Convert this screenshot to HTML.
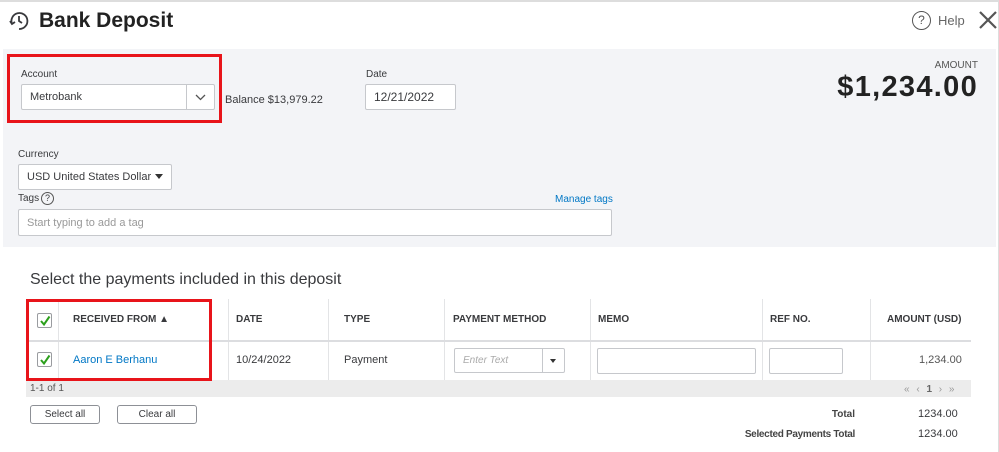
<!DOCTYPE html>
<html><head><style>
*{box-sizing:border-box;margin:0;padding:0}
body{width:999px;height:452px;overflow:hidden;background:#fff;font-family:"Liberation Sans",sans-serif;color:#393a3d;position:relative}
.a{position:absolute}
.inp{position:absolute;background:#fff;border:1px solid #c6c8cc;border-radius:2px;font-size:11px;color:#393a3d;padding-left:8px;display:flex;align-items:center}
.lbl{position:absolute;font-size:10px;color:#393a3d}
.th{position:absolute;top:314px;font-size:10px;font-weight:bold;color:#393a3d}
.vl{position:absolute;top:299px;height:81px;width:1px;background:#e3e4e6}
.cb{position:absolute;width:15px;height:15px;border:1px solid #9a9ca0;border-radius:2px;background:#fff}
.btn{position:absolute;height:19px;border:1px solid #8d9096;border-radius:3px;font-size:10px;display:flex;align-items:center;justify-content:center;background:#fff}
</style></head><body>
<div class="a" style="left:0;top:0;width:999px;height:2px;background:#ddd"></div>
<div class="a" style="left:998px;top:0;width:1px;height:452px;background:#ddd"></div>
<svg class="a" style="left:8px;top:10px" width="22" height="22" viewBox="0 0 22 22" fill="none" stroke="#393a3d" stroke-width="1.8"><path d="M4 14 A8 8 0 1 1 11 19"/><path d="M11 6v5l3 2"/><path d="M2 11l2 3 3-2"/></svg>
<div class="a" style="left:39px;top:9px;font-size:21px;font-weight:bold;color:#222">Bank Deposit</div>
<div class="a" style="left:912px;top:11px;width:19px;height:19px;border:1.5px solid #555;border-radius:50%;font-size:12px;text-align:center;line-height:16px;color:#555">?</div>
<div class="a" style="left:938px;top:13px;font-size:13px;color:#666">Help</div>
<svg class="a" style="left:978px;top:10px" width="20" height="20"><path d="M2 2L18 18M18 2L2 18" stroke="#555" stroke-width="2.2"/></svg>

<div class="a" style="left:3px;top:49px;width:993px;height:198px;background:#f3f4f7"></div>
<div class="a" style="left:7px;top:54px;width:215px;height:69px;border:3px solid #e8141a"></div>
<div class="lbl" style="left:21px;top:69px">Account</div>
<div class="inp" style="left:21px;top:84px;width:194px;height:26px">Metrobank</div>
<div class="a" style="left:186px;top:85px;width:1px;height:24px;background:#c6c8cc"></div>
<svg class="a" style="left:195px;top:94px" width="11" height="7"><path d="M1 1l4.5 4.5L10 1" stroke="#555" fill="none" stroke-width="1.3"/></svg>
<div class="a" style="left:225px;top:94px;font-size:11px">Balance $13,979.22</div>
<div class="lbl" style="left:366px;top:69px">Date</div>
<div class="inp" style="left:365px;top:84px;width:91px;height:26px;font-size:12px">12/21/2022</div>
<div class="a" style="right:21px;top:60px;font-size:10px;color:#555">AMOUNT</div>
<div class="a" style="right:21px;top:71px;font-size:29px;font-weight:bold;color:#222;letter-spacing:1.3px">$1,234.00</div>
<div class="lbl" style="left:18px;top:149px">Currency</div>
<div class="inp" style="left:18px;top:164px;width:154px;height:26px">USD United States Dollar</div>
<div class="a" style="left:155px;top:174px;border-left:4px solid transparent;border-right:4px solid transparent;border-top:5px solid #333"></div>
<div class="lbl" style="left:18px;top:193px">Tags</div>
<div class="a" style="left:41px;top:192px;width:13px;height:13px;border:1px solid #555;border-radius:50%;font-size:9px;text-align:center;line-height:11px">?</div>
<div class="a" style="left:555px;top:194px;font-size:10px;color:#0077c5">Manage tags</div>
<div class="inp" style="left:18px;top:209px;width:594px;height:27px;color:#999">Start typing to add a tag</div>

<div class="a" style="left:30px;top:271px;font-size:16px;color:#393a3d">Select the payments included in this deposit</div>
<div class="vl" style="left:58px"></div><div class="vl" style="left:228px"></div><div class="vl" style="left:328px"></div><div class="vl" style="left:444px"></div><div class="vl" style="left:590px"></div><div class="vl" style="left:762px"></div><div class="vl" style="left:870px"></div>
<div class="a" style="left:26px;top:340px;width:945px;height:2px;background:#dcdde0"></div>
<div class="a" style="left:26px;top:380px;width:945px;height:17px;background:#ececec"></div>
<div class="a" style="left:30px;top:383px;font-size:10px;color:#555">1-1 of 1</div>
<div class="a" style="left:904px;top:384px;font-size:10px;color:#999;letter-spacing:2px">« ‹ <b style="color:#666">1</b> › »</div>
<div class="cb" style="left:37px;top:313px"></div><svg class="a" style="left:39px;top:315px" width="12" height="12"><path d="M2 6l3 3.5L10.5 1.5" stroke="#2ca01c" stroke-width="2" fill="none"/></svg>
<div class="cb" style="left:37px;top:352px"></div><svg class="a" style="left:39px;top:354px" width="12" height="12"><path d="M2 6l3 3.5L10.5 1.5" stroke="#2ca01c" stroke-width="2" fill="none"/></svg>
<div class="th" style="left:73px">RECEIVED FROM ▲</div>
<div class="th" style="left:236px">DATE</div>
<div class="th" style="left:344px">TYPE</div>
<div class="th" style="left:453px">PAYMENT METHOD</div>
<div class="th" style="left:598px">MEMO</div>
<div class="th" style="left:770px">REF NO.</div>
<div class="th" style="left:887px">AMOUNT (USD)</div>
<div class="a" style="left:73px;top:354px;font-size:11px;color:#0077c5">Aaron E Berhanu</div>
<div class="a" style="left:236px;top:354px;font-size:11px">10/24/2022</div>
<div class="a" style="left:344px;top:354px;font-size:11px">Payment</div>
<div class="inp" style="left:454px;top:348px;width:111px;height:25px;color:#aaa;font-style:italic;font-size:10px">Enter Text</div>
<div class="a" style="left:542px;top:349px;width:1px;height:23px;background:#c6c8cc"></div>
<div class="a" style="left:550px;top:359px;border-left:3px solid transparent;border-right:3px solid transparent;border-top:4px solid #333"></div>
<div class="inp" style="left:597px;top:348px;width:159px;height:26px"></div>
<div class="inp" style="left:769px;top:348px;width:74px;height:26px"></div>
<div class="a" style="left:919px;top:354px;font-size:11px;color:#555">1,234.00</div>
<div class="a" style="left:26px;top:299px;width:186px;height:82px;border:3px solid #e8141a"></div>
<div class="btn" style="left:30px;top:405px;width:70px">Select all</div>
<div class="btn" style="left:117px;top:405px;width:80px">Clear all</div>
<div class="a" style="right:144px;top:409px;font-size:10px;font-weight:bold;color:#444">Total</div>
<div class="a" style="left:918px;top:408px;font-size:11px">1234.00</div>
<div class="a" style="right:144px;top:429px;font-size:10px;font-weight:bold;color:#444;letter-spacing:-0.3px">Selected Payments Total</div>
<div class="a" style="left:918px;top:428px;font-size:11px">1234.00</div>
</body></html>
